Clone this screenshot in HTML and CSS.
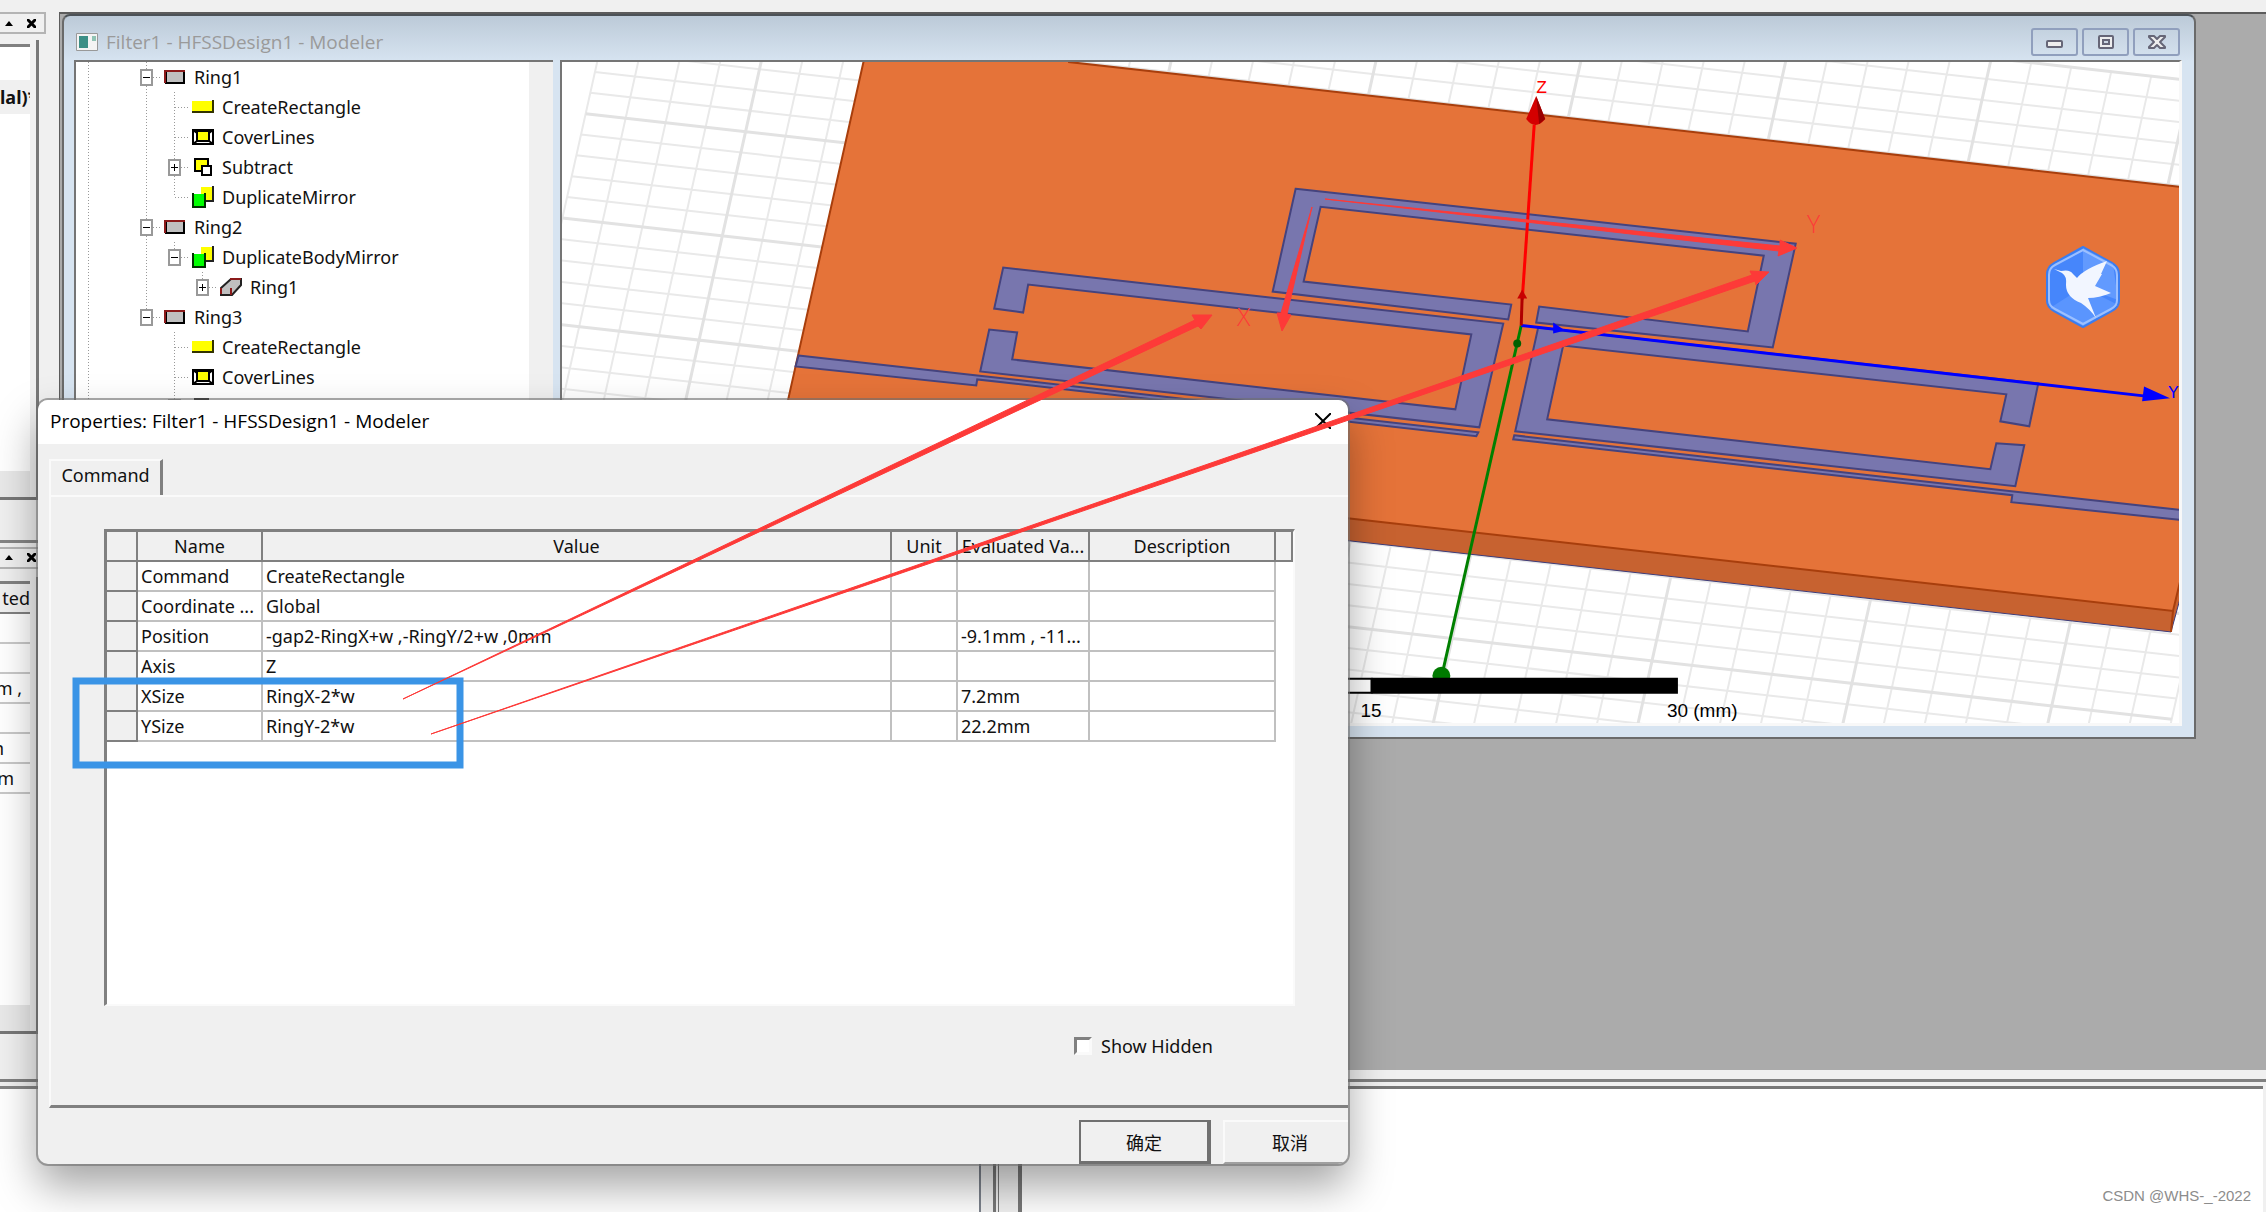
FILE: index.html
```
<!DOCTYPE html>
<html lang="en">
<head>
<meta charset="utf-8">
<title>Filter1 - HFSSDesign1 - Modeler</title>
<link rel="stylesheet" href="styles.css">
</head>
<body>
<svg width="0" height="0" class="defs" aria-hidden="true">
  <symbol id="i-sheet" viewBox="0 0 22 22"><path fill="#c0c0c0" stroke="#000" stroke-width="2" d="M2 5h18v12H2z"/><path fill="none" stroke="#8b1a1a" stroke-width="2" d="M1 17V5h20"/></symbol>
  <symbol id="i-rect" viewBox="0 0 22 22"><path fill="#ff0" d="M0 5h20v10H0z"/><path fill="none" stroke="#333300" stroke-width="2" d="M0 16h21V4"/></symbol>
  <symbol id="i-cover" viewBox="0 0 22 22"><path fill="#fff" stroke="#000" stroke-width="2" d="M1 4h20v14H1z"/><path fill="#ff0" stroke="#000" stroke-width="2" d="M5 5h12v10H5z"/><path stroke="#000" stroke-width="2" d="M1 4l4 3M21 4l-4 3M1 18l4-3M21 18l-4-3"/></symbol>
  <symbol id="i-sub" viewBox="0 0 22 22"><path fill="#ff0" stroke="#000" stroke-width="2" d="M3 3h13v12H3z"/><path fill="#fff" stroke="#000" stroke-width="2" d="M10 10h9v9h-9z"/></symbol>
  <symbol id="i-mirror" viewBox="0 0 22 22"><path fill="#ff0" d="M9 1h11v14H9z"/><path fill="none" stroke="#222" stroke-width="2" d="M10 15h11V0"/><path fill="#0f0" d="M1 8h11v12H1z"/><path fill="none" stroke="#003000" stroke-width="2" d="M1 7v14h12V7"/></symbol>
  <symbol id="i-body" viewBox="0 0 22 22"><path fill="#c0c0c0" stroke="#222" stroke-width="2" d="M1 12L11 3h10v6l-9 10H1z"/><path fill="none" stroke="#8b1a1a" stroke-width="2" d="M1 18v-6M10 3h11M11 12v7"/></symbol>
</svg>

<div class="app">
  <aside class="dock">
    <section class="dock-panel">
      <header class="dock-head"><button aria-label="Collapse"><svg width="8" height="5"><path d="M0 5l4-5 4 5z"/></svg></button><button aria-label="Close"><svg width="9" height="9"><path stroke="#000" stroke-width="3" d="M0 0l9 9M9 0l-9 9"/></svg></button></header>
      <div class="dock-frame"><div class="dock-body project"><b>lal)*</b></div></div>
    </section>
    <section class="dock-panel">
      <header class="dock-head"><button aria-label="Collapse"><svg width="8" height="5"><path d="M0 5l4-5 4 5z"/></svg></button><button aria-label="Close"><svg width="9" height="9"><path stroke="#000" stroke-width="3" d="M0 0l9 9M9 0l-9 9"/></svg></button></header>
      <div class="dock-frame"><div class="dock-body values">
        <p class="vh">ted</p><p></p><p></p><p class="vl">m ,</p><p></p><p class="vn">m</p><p class="vm">m</p>
      </div></div>
    </section>
  </aside>

  <main class="mdi">
    <section class="window">
      <header class="window-title">
        <svg class="window-icon" width="22" height="18"><path fill="#f4f4f4" stroke="#999" d="M.5 .5h21v17H.5z"/><path fill="#3c8f86" d="M3 3h9v12H3z"/><path fill="#8fc3b4" d="M16 3h4v5h-4z"/></svg>
        <h1>Filter1 - HFSSDesign1 - Modeler</h1>
        <div class="window-buttons">
          <button aria-label="Minimize"><svg width="18" height="16"><rect x="1" y="7" width="15" height="6" rx="1" fill="#eee" stroke="#667" stroke-width="2"/></svg></button>
          <button aria-label="Maximize"><svg width="18" height="16"><rect x="2" y="2" width="14" height="12" rx="1" fill="#eee" stroke="#667" stroke-width="2"/><rect x="6" y="6" width="6" height="4" fill="#ccd6e2" stroke="#667" stroke-width="2"/></svg></button>
          <button aria-label="Close"><svg width="18" height="16"><path fill="#eee" stroke="#667" stroke-width="2" stroke-linejoin="round" d="M1 2h5l3 3 3-3h5v1l-5 5 5 5v1h-5l-3-3-3 3H1v-1l5-5-5-5z"/></svg></button>
        </div>
      </header>
      <div class="window-body">
        <div class="tree">
          <div class="row"><i class="root"></i><i class="cell box v"></i><svg class="ico"><use href="#i-sheet"/></svg>Ring1</div>
          <div class="row"><i class="root"></i><i class="cell v"></i><i class="cell v h"></i><svg class="ico"><use href="#i-rect"/></svg>CreateRectangle</div>
          <div class="row"><i class="root"></i><i class="cell v"></i><i class="cell v h"></i><svg class="ico"><use href="#i-cover"/></svg>CoverLines</div>
          <div class="row"><i class="root"></i><i class="cell v"></i><i class="cell v box plus"></i><svg class="ico"><use href="#i-sub"/></svg>Subtract</div>
          <div class="row"><i class="root"></i><i class="cell v"></i><i class="cell v h last"></i><svg class="ico"><use href="#i-mirror"/></svg>DuplicateMirror</div>
          <div class="row"><i class="root"></i><i class="cell v box"></i><svg class="ico"><use href="#i-sheet"/></svg>Ring2</div>
          <div class="row"><i class="root"></i><i class="cell v"></i><i class="cell v box last"></i><svg class="ico"><use href="#i-mirror"/></svg>DuplicateBodyMirror</div>
          <div class="row"><i class="root"></i><i class="cell v"></i><i class="cell"></i><i class="cell v box plus last"></i><svg class="ico"><use href="#i-body"/></svg>Ring1</div>
          <div class="row"><i class="root"></i><i class="cell v box last"></i><svg class="ico"><use href="#i-sheet"/></svg>Ring3</div>
          <div class="row"><i class="root"></i><i class="cell"></i><i class="cell v h"></i><svg class="ico"><use href="#i-rect"/></svg>CreateRectangle</div>
          <div class="row"><i class="root"></i><i class="cell"></i><i class="cell v h"></i><svg class="ico"><use href="#i-cover"/></svg>CoverLines</div>
          <div class="row"><i class="root"></i><i class="cell"></i><i class="cell v box plus"></i><svg class="ico"><use href="#i-sub"/></svg></div>
        </div>
        <div class="view">
          <svg class="scene" viewBox="561 62 1620 662" role="img" aria-label="3D model view">
            <g transform="matrix(40.05 4.505 -4.656 20.88 744.9 131.8)" fill="none" stroke="#e9e9e9">
              <path vector-effect="non-scaling-stroke" stroke-width="2" d="M-4-10v45M-3-10v45M-2-10v45M-1-10v45M1-10v45M2-10v45M3-10v45M4-10v45M6-10v45M7-10v45M8-10v45M9-10v45M11-10v45M12-10v45M13-10v45M14-10v45M16-10v45M17-10v45M18-10v45M19-10v45M21-10v45M22-10v45M23-10v45M24-10v45M26-10v45M27-10v45M28-10v45M29-10v45M31-10v45M32-10v45M33-10v45M34-10v45M36-10v45M37-10v45M38-10v45M-4-9h42M-4-8h42M-4-7h42M-4-6h42M-4-4h42M-4-3h42M-4-2h42M-4-1h42M-4 1h42M-4 2h42M-4 3h42M-4 4h42M-4 6h42M-4 7h42M-4 8h42M-4 9h42M-4 11h42M-4 12h42M-4 13h42M-4 14h42M-4 16h42M-4 17h42M-4 18h42M-4 19h42M-4 21h42M-4 22h42M-4 23h42M-4 24h42"/>
              <path vector-effect="non-scaling-stroke" stroke-width="3" stroke="#e2e2e2" d="M0-10v45M5-10v45M10-10v45M15-10v45M20-10v45M25-10v45M30-10v45M35-10v45M-4-10h42M-4-5h42M-4 0h42M-4 5h42M-4 10h42M-4 15h42M-4 20h42"/>
            </g>
            <path fill="#c76230" stroke="#3b3b7a" d="M1100 514L2173 633L2182 600V560L1100 480z"/>
            <path fill="#e57339" stroke="#a83e0c" stroke-width="2" d="M863 62L776 452L1348 519L2175 612L2182 583V187L1069 62V50H866z"/>
            <path stroke="#a83e0c" stroke-width="2" d="M2175 612L2173 633"/>
            <g fill="#7876ae" stroke="#45437e" stroke-width="2">
              <path d="M1296 189L1797 244L1774 348L1537 323L1540 307L1749 332L1765 256L1321 207L1304 282L1512 305L1509 320L1273 292z"/>
              <path d="M1003 268L994 309L1023 313L1028 285L1472 335L1456 410L1012 360L1017 333L989 330L980 372L1480 428L1504 324z"/>
              <path d="M798 356L977 376L1479 433L1477 437L977 380L976 386L795 367z"/>
              <path d="M1539 328L2040 384L2031 427L2002 422L2008 395L1564 346L1548 420L1992 470L1998 444L2026 446L2017 487L1516 432z"/>
              <path d="M1515 436L2013 492L2184 511V521L2013 503L2014 496L1514 440z"/>
            </g>
            <path fill="none" stroke="#008000" stroke-width="3" d="M1522 326L1444 670"/>
            <circle cx="1518" cy="344" r="4" fill="#006000"/><circle cx="1442" cy="677" r="9" fill="#007a00"/>
            <path fill="none" stroke="#00f" stroke-width="3" d="M1522 326L2150 397"/>
            <path fill="#00f" d="M2146 387L2172 399L2144 402zM1554 323L1566 331L1554 334z"/>
            <path fill="none" stroke="#f00" stroke-width="3" d="M1523 300L1535 125"/>
            <path fill="none" stroke="#b00000" stroke-width="3" d="M1522 326L1523 295"/>
            <path fill="#c80000" d="M1523 290L1528 299H1518z"/>
            <path fill="#d40000" d="M1537 96L1546 119Q1536 131 1527 119z"/><path fill="#900" d="M1537 96L1546 119L1540 124z"/>
            <text class="axis" x="1537" y="93" fill="#f00">Z</text>
            <text class="axis" x="2170" y="399" fill="#00f">Y</text>
            <path fill="#fff" stroke="#000" stroke-width="2" d="M1070 680h302v14h-302z"/><path d="M1372 679h307v16h-307z"/>
            <text class="scale" x="1361" y="718">15</text><text class="scale" x="1668" y="718">30 (mm)</text>
          </svg>
        </div>
      </div>
    </section>
  </main>

  <footer class="output">
    <div class="messages"></div>
    <div class="splitter"></div>
    <div class="progress"><span class="watermark">CSDN @WHS-_-2022</span></div>
  </footer>
</div>

<form class="dialog" role="dialog" aria-label="Properties">
  <header class="dialog-title"><h2>Properties: Filter1 - HFSSDesign1 - Modeler</h2><button type="button" class="x" aria-label="Close"><svg width="16" height="16"><path stroke="#000" stroke-width="2" d="M0 0l16 16M16 0L0 16"/></svg></button></header>
  <div class="tabs"><button type="button" class="tab">Command</button></div>
  <div class="sheet">
    <div class="grid">
      <table>
        <colgroup><col class="c-sel"><col class="c-name"><col><col class="c-unit"><col class="c-eval"><col class="c-desc"><col class="c-end"></colgroup>
        <thead><tr><th></th><th>Name</th><th>Value</th><th>Unit</th><th>Evaluated Va...</th><th>Description</th><th></th></tr></thead>
        <tbody>
          <tr><th></th><td>Command</td><td>CreateRectangle</td><td></td><td></td><td></td><td></td></tr>
          <tr><th></th><td>Coordinate ...</td><td>Global</td><td></td><td></td><td></td><td></td></tr>
          <tr><th></th><td>Position</td><td>-gap2-RingX+w ,-RingY/2+w ,0mm</td><td></td><td>-9.1mm , -11...</td><td></td><td></td></tr>
          <tr><th></th><td>Axis</td><td>Z</td><td></td><td></td><td></td><td></td></tr>
          <tr><th></th><td>XSize</td><td>RingX-2*w</td><td></td><td>7.2mm</td><td></td><td></td></tr>
          <tr><th></th><td>YSize</td><td>RingY-2*w</td><td></td><td>22.2mm</td><td></td><td></td></tr>
        </tbody>
      </table>
    </div>
    <label class="hidden-opt"><input type="checkbox">Show Hidden</label>
  </div>
  <div class="actions"><button type="button" class="ok">确定</button><button type="button" class="cancel">取消</button></div>
</form>

<svg class="notes" aria-hidden="true">
  <path fill="none" stroke="#3a94e6" stroke-width="7" d="M76 681H460V765H76z"/>
  <g fill="#fd3a38" stroke="#fd3a38" stroke-width="1">
    <path d="M403 699L1195 320L1192 315L1212 315L1201 329L1198 326z"/>
    <path d="M431 734L1752 275L1750 271L1769 272L1756 285L1755 281z"/>
    <path d="M1325 199L1780 246V240L1797 248L1778 256L1779 251z"/>
    <path d="M1312 207L1281 313L1277 313L1282 331L1291 315L1287 314z"/>
  </g>
  <text class="note" x="1237" y="326">X</text>
  <text class="note" x="1807" y="233">Y</text>
  <g>
    <path fill="#4686fb" stroke="#3a7df0" stroke-width="2" stroke-linejoin="round" d="M2083 247L2112 263Q2119 267 2119 274V301Q2119 307 2112 311L2083 327L2054 311Q2047 307 2047 301V274Q2047 267 2054 263z"/>
    <path fill="#6ea2ff" opacity=".7" d="M2083 248L2113 264L2118 300L2083 287z"/>
    <path fill="#5f98ff" opacity=".8" d="M2083 287L2118 305L2083 326L2050 308z"/>
    <path fill="none" stroke="#9cc0ff" stroke-width="2" d="M2083 250L2111 265Q2117 268 2117 275V300Q2117 306 2111 309L2083 324L2055 309Q2049 306 2049 300V275Q2049 268 2055 265z"/>
    <path fill="#f2f6ff" d="M2054 269L2061 271Q2070 269 2073 274L2077 278Q2084 269 2107 261L2101 274H2102L2095 286L2111 293Q2099 298 2088 298L2096 318Q2090 309 2081 303Q2066 297 2066 285Q2067 276 2062 273z"/>
  </g>
</svg>
</body>
</html>
```
FILE: styles.css
```
* { box-sizing: border-box; }
body { margin: 0; background: #f0f0f0; color: #111; font: 18px/30px "Noto Sans", "Noto Sans CJK SC", sans-serif; }
h1, h2, p { margin: 0; font-size: inherit; font-weight: 400; }
button { font: inherit; color: inherit; padding: 0; border: 0; background: none; }
.defs, .notes { position: absolute; }

.app { display: grid; grid-template-columns: 59px 1fr; grid-template-rows: 1fr 133px; row-gap: 9px; min-height: 100vh; padding-top: 12px; overflow: hidden; }

/* docked panels cut off by the left edge */
.dock { display: flex; flex-direction: column; overflow: hidden; }
.dock-panel { flex: 1; display: flex; flex-direction: column; padding-bottom: 44px; border-bottom: 3px solid #858585; }
.dock-panel + .dock-panel { padding: 4px 0 36px; border: 0; flex-basis: 8px; }
.dock-head { display: flex; align-items: center; justify-content: flex-end; gap: 14px; height: 22px; width: 46px; padding-right: 8px; border: 2px solid #b4b4b4; border-left: 0; }
.dock-head button { display: flex; }
.dock-frame { flex: 1; width: 39px; margin-top: 6px; padding: 4px 6px 0 0; border: solid #777; border-width: 0 3px 3px 0; }
.dock-panel + .dock-panel .dock-frame { margin-top: 8px; padding-top: 4px; }
.dock-panel:first-child { padding-bottom: 40px; }
.dock-body { height: 100%; border-top: 3px solid #808080; border-bottom: 26px solid #e9e9e9; background: #fff; overflow: hidden; }
.project { padding-top: 33px; }
.project b { display: block; line-height: 34px; background: #f0f0f0; }
.values p { display: flex; justify-content: flex-end; height: 30px; border-bottom: 2px solid #c8c8c8; line-height: 28px; white-space: nowrap; }
.values .vh { background: #f0f0f0; border-color: #808080; }
.values .vl { padding-right: 8px; }
.values .vn { padding-right: 26px; }
.values .vm { padding-right: 16px; }

/* modeler child window */
.mdi { display: flex; align-items: flex-start; padding-right: 70px; padding-left: 2px; border: solid #5c5c5c; border-width: 2px 0 0 1px; background: #ababab; }
.window { flex: 1; min-width: 0; padding: 0 12px 11px 10px; border: 2px solid #6a6a6a; border-top-color: #4c5257; border-radius: 8px 8px 0 0; background: linear-gradient(#bccad8, #d7e4f1 46px); }
.window-title { display: flex; align-items: center; height: 44px; padding: 8px 2px 0; color: #9a9a9a; }
.window-title h1 { margin-left: 8px; font: 19px/28px "Open Sans", sans-serif; }
.window-buttons { display: flex; gap: 4px; margin-left: auto; align-self: flex-start; padding-top: 4px; }
.window-buttons button { display: flex; align-items: center; justify-content: center; width: 47px; height: 28px; border: 2px solid #909fbd; border-radius: 3px; }
.window-body { display: flex; gap: 7px; }
.tree { flex: none; width: 479px; border: solid #757575; border-width: 2px 0 0 2px; background: linear-gradient(#f0f0f0, #f0f0f0) right / 24px 100% no-repeat #fff; overflow: hidden; }
.view { flex: 1; min-width: 0; border: solid #757575; border-width: 2px 0 0 2px; background: #fff; border-right: 3px solid #f8f8f8; border-bottom: 3px solid #f8f8f8; }
.scene { display: block; width: 100%; height: auto; }
.axis { font: 18px "Liberation Mono", monospace; }
.scale { font: 19px "Liberation Sans", sans-serif; }
.row { display: flex; align-items: center; height: 30px; white-space: nowrap; }
.root { align-self: stretch; width: 56px; background: repeating-linear-gradient(#999 0 1px, transparent 1px 3px) 12px 0 / 1px 100% no-repeat; }
.cell { display: grid; grid-template-columns: 8px 13px 9px; align-items: center; width: 28px; height: 30px; }
.ico { width: 22px; height: 22px; margin: 0 8px 0 4px; }
.v { background: repeating-linear-gradient(#999 0 1px, transparent 1px 3px) 14px 0 / 1px 100% no-repeat; }
.v.last { background-size: 1px 50%; }
.h::after, .box::after { content: ""; grid-row: 1; grid-column: 3; height: 1px; background: repeating-linear-gradient(90deg, #999 0 1px, transparent 1px 3px); }
.h::after { grid-column: 2 / 4; margin-left: 7px; }
.box::before { content: ""; grid-row: 1; grid-column: 2; height: 13px; border: 2px solid #999; background: linear-gradient(#000, #000) center / 7px 1px no-repeat #fff; }
.box.plus::before { background: linear-gradient(#000, #000) center / 7px 1px no-repeat, linear-gradient(#000, #000) center / 1px 7px no-repeat #fff; }

/* bottom panes */
.output { grid-column: 1 / -1; display: flex; border-top: 3px solid #808080; padding-top: 4px; }
.messages { flex: none; width: 981px; border-top: 3px solid #858585; background: #fff; border-right: 2px solid #7c828c; }
.splitter { flex: none; width: 6px; margin: -4px 19px 0 12px; border: solid #777; border-width: 0 1px 0 3px; }
.progress { flex: 1; display: flex; align-items: flex-end; justify-content: flex-end; margin-right: 3px; padding: 0 12px 4px; border: solid #777; border-width: 3px 0 0 4px; background: #fff; }
.watermark { font: 15px/24px "Liberation Sans", sans-serif; color: #8c8c8c; }

/* properties dialog */
.dialog { position: absolute; left: 38px; top: 400px; width: 1310px; height: 764px; display: flex; flex-direction: column; border-radius: 10px; background: #f0f0f0; overflow: hidden; box-shadow: 0 0 0 2px rgba(110, 110, 110, .6), 0 22px 44px rgba(0, 0, 0, .36); }
.dialog-title { display: flex; align-items: center; justify-content: space-between; height: 44px; padding: 0 17px 2px 12px; background: #fff; }
.dialog-title h2 { font: 19px/28px "Open Sans", sans-serif; color: #000; }
.x { display: flex; }
.tabs { padding: 15px 0 0 11px; height: 51px; }
.tab { width: 114px; height: 36px; padding-bottom: 6px; border: solid #fafafa; border-width: 2px 0 0 2px; border-right: 3px solid #808080; line-height: 28px; }
.sheet { flex: 1; margin-left: 11px; padding: 32px 53px 0; border: solid #fafafa; border-width: 2px 0 0 2px; border-bottom: 3px solid #808080; }
.grid { height: 477px; border: solid #808080; border-width: 3px 0 0 3px; border-right: 2px solid #fafafa; border-bottom: 2px solid #fafafa; background: #fff; }
table { width: 100%; table-layout: fixed; border-collapse: separate; border-spacing: 0; }
.c-sel { width: 31px; } .c-name { width: 125px; } .c-unit { width: 66px; } .c-eval { width: 132px; } .c-desc { width: 186px; } .c-end { width: 17px; }
th, td { height: 30px; padding: 0; line-height: 28px; font-weight: 400; white-space: nowrap; overflow: hidden; }
th { background: #f0f0f0; border: solid #808080; border-width: 0 2px 2px 0; text-align: center; }
td { padding-left: 3px; border: solid #c0c0c0; border-width: 0 2px 2px 0; }
td:last-child { border: 0; }
.hidden-opt { display: flex; align-items: center; gap: 9px; width: max-content; margin: 25px 0 0 970px; }
.hidden-opt input { appearance: none; width: 18px; height: 18px; margin: 0; border: 3px solid #808080; border-right-color: #fafafa; border-bottom-color: #fafafa; background: #fff; }
.actions { display: flex; gap: 12px; height: 56px; padding: 12px 0 0 1041px; }
.actions button { flex: none; width: 132px; height: 44px; font-family: "Noto Sans CJK SC", sans-serif; }
.ok { border: 2px solid #707070; border-right-width: 4px; border-bottom-width: 3px; }
.cancel { border: solid #fafafa; border-width: 2px 0 0 2px; border-bottom: 2px solid #a0a0a0; }

/* markup drawn over the screen */
.notes { left: 0; top: 0; width: 100%; height: 100%; pointer-events: none; }
.note { font: 300 25px "Open Sans", sans-serif; fill: #fd3a38; }
```
